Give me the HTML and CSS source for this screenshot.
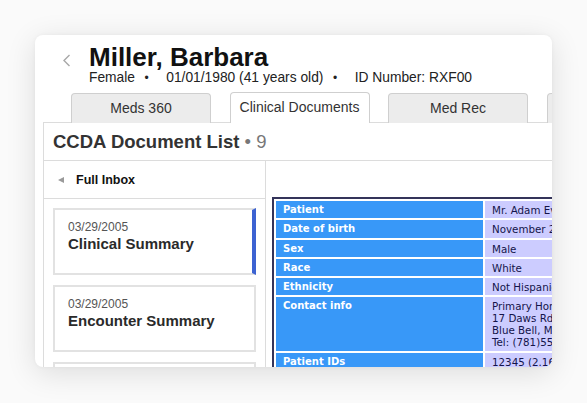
FILE: index.html
```html
<!DOCTYPE html>
<html>
<head>
<meta charset="utf-8">
<link rel="stylesheet" href="styles.css">
</head>
<body>
<div class="card">
  <div class="patient">
    <div class="back">
      <svg width="9" height="13" viewBox="0 0 9 13"><path d="M7.5 1 L2 6.5 L7.5 12" fill="none" stroke="#a8a8a8" stroke-width="1.4"/></svg>
    </div>
    <div class="who">
      <div class="name">Miller, Barbara</div>
      <div class="meta"><span>Female</span><span class="dot">•</span><span>01/01/1980 (41 years old)</span><span class="dot">•</span><span>ID Number: RXF00</span></div>
    </div>
  </div>
  <div class="tabs">
    <div class="tab">Meds 360</div>
    <div class="tab active">Clinical Documents</div>
    <div class="tab">Med Rec</div>
    <div class="tab"></div>
  </div>
  <div class="panel">
    <div class="panel-head">CCDA Document List <span class="count">• 9</span></div>
    <div class="panel-body">
      <div class="list">
        <div class="inbox"><span class="tri"></span><span>Full Inbox</span></div>
        <div class="docs">
          <div class="doc selected"><div class="date">03/29/2005</div><div class="title">Clinical Summary</div></div>
          <div class="doc"><div class="date">03/29/2005</div><div class="title">Encounter Summary</div></div>
          <div class="doc"></div>
        </div>
      </div>
      <div class="viewer">
        <table class="ccda">
          <tr><th>Patient</th><td>Mr. Adam Everyman</td></tr>
          <tr><th>Date of birth</th><td>November 21, 1962</td></tr>
          <tr><th>Sex</th><td>Male</td></tr>
          <tr><th>Race</th><td>White</td></tr>
          <tr><th>Ethnicity</th><td>Not Hispanic or Latino</td></tr>
          <tr><th>Contact info</th><td>Primary Home:<br>17 Daws Rd.<br>Blue Bell, MA 02368<br>Tel: (781)555-1212</td></tr>
          <tr><th>Patient IDs</th><td>12345 (2.16.840.1.113883.19.5)</td></tr>
        </table>
      </div>
    </div>
  </div>
</div>
</body>
</html>
```
FILE: styles.css
```css
html, body {
  margin: 0;
  padding: 0;
}
body {
  width: 587px;
  height: 403px;
  overflow: hidden;
  background: #fafafa;
  font-family: "Liberation Sans", Arial, sans-serif;
  color: #222;
  padding-top: 35px;
  padding-left: 35px;
  box-sizing: border-box;
}
.card {
  width: 517px;
  height: 332px;
  background: #fff;
  border-radius: 8px;
  overflow: hidden;
  box-shadow: 0 6px 30px rgba(0, 0, 0, 0.12), 0 0 4px rgba(0, 0, 0, 0.04);
}
.patient {
  display: flex;
  padding: 9px 0 0 27px;
}
.back {
  width: 27px;
  flex-shrink: 0;
}
.back svg {
  display: block;
  margin-top: 10px;
}
.name {
  font-size: 26px;
  font-weight: bold;
  line-height: 26px;
  color: #111;
}
.meta {
  margin-top: 1px;
  font-size: 13.8px;
  line-height: 13px;
  color: #222;
  white-space: nowrap;
}
.dot {
  display: inline-block;
  font-size: 12px;
  margin: 0 17.5px 0 9.5px;
}
.tabs {
  display: flex;
  gap: 18.5px;
  padding-left: 36px;
  margin-top: 8px;
  white-space: nowrap;
}
.tab {
  flex-shrink: 0;
  width: 140px;
  height: 30px;
  box-sizing: border-box;
  border: 1px solid #cfcfcf;
  border-bottom: none;
  border-radius: 4px 4px 0 0;
  background: #ececec;
  text-align: center;
  font-size: 14px;
  line-height: 29px;
  color: #333;
  margin-bottom: -1px;
}
.tab.active {
  background: #fff;
  height: 31px;
  margin-top: -1px;
  position: relative;
  z-index: 1;
}
.panel {
  margin-left: 8px;
  border-left: 1px solid #dcdcdc;
  border-top: 1px solid #dcdcdc;
}
.panel-head {
  height: 37px;
  border-bottom: 1px solid #dcdcdc;
  padding-left: 9px;
  font-size: 18.5px;
  font-weight: bold;
  line-height: 37px;
  color: #333;
  white-space: nowrap;
}
.count {
  font-weight: normal;
  color: #777;
}
.panel-body {
  display: flex;
}
.list {
  width: 221px;
  flex-shrink: 0;
  border-right: 1px solid #dcdcdc;
}
.inbox {
  height: 37px;
  border-bottom: 1px solid #dcdcdc;
  display: flex;
  align-items: center;
  padding-left: 14px;
  gap: 12px;
  font-size: 12.5px;
  font-weight: bold;
  color: #111;
}
.tri {
  width: 0;
  height: 0;
  border-top: 3.5px solid transparent;
  border-bottom: 3.5px solid transparent;
  border-right: 6px solid #9a9a9a;
}
.docs {
  display: flex;
  flex-direction: column;
  gap: 10px;
  padding: 9px 9px 0 9px;
}
.doc {
  height: 67px;
  flex-shrink: 0;
  box-sizing: border-box;
  border: 2px solid #e2e2e2;
  padding: 9.5px 13px 0;
}
.doc.selected {
  border-right: 4px solid #3d63d2;
}
.date {
  font-size: 12px;
  line-height: 14px;
  color: #555;
}
.title {
  margin-top: 1px;
  font-size: 15px;
  line-height: 17px;
  font-weight: bold;
  color: #2a2a2a;
}
.viewer {
  flex: 1;
  min-width: 0;
  padding: 36px 0 0 6px;
  overflow: hidden;
}
.ccda {
  width: max-content;
  border: 2px solid #34345a;
  border-collapse: separate;
  border-spacing: 2px;
  font-family: "DejaVu Sans", Verdana, sans-serif;
  font-size: 10px;
  line-height: 12px;
}
.ccda th, .ccda td {
  padding: 3px 7px 2.25px;
  text-align: left;
  vertical-align: top;
  white-space: nowrap;
}
.ccda th {
  width: 193px;
  min-width: 193px;
  background: #3898f8;
  color: #fff;
  font-weight: bold;
}
.ccda td {
  background: #ccccff;
  color: #14144a;
  font-size: 10.3px;
}
```
